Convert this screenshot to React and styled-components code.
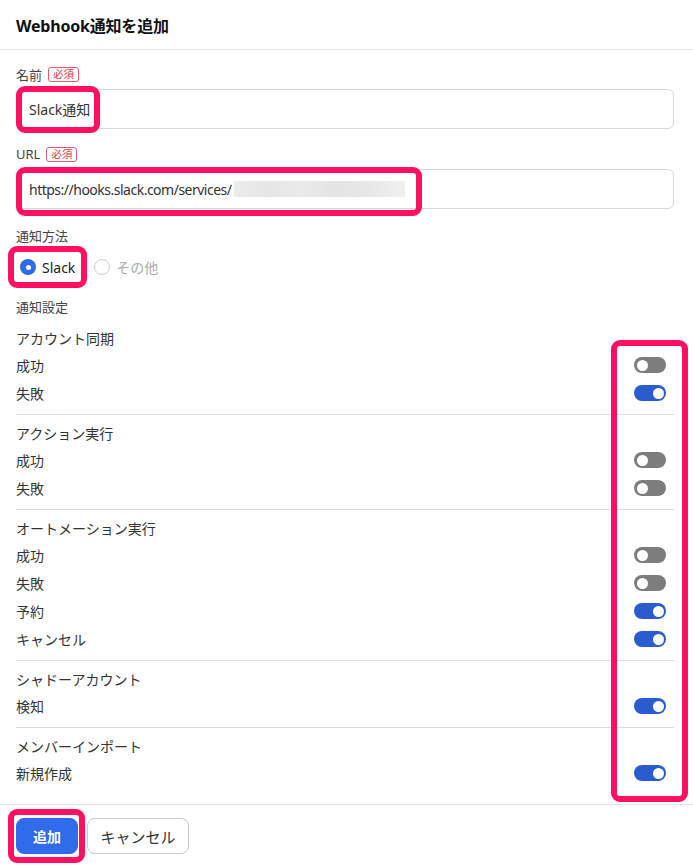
import React from "react";
import styled, { createGlobalStyle } from "styled-components";

const Global = createGlobalStyle`
  html, body { margin: 0; padding: 0; background: #fff; }
  * { box-sizing: border-box; }
  body { font-family: "Noto Sans", "Noto Sans CJK JP", sans-serif; color: #333; }
`;

const Page = styled.div`
  position: relative;
  width: 693px;
  min-height: 868px;
  background: #fff;
`;

const Header = styled.header`
  height: 50px;
  display: flex;
  align-items: center;
  padding: 0 16px;
  border-bottom: 1px solid #e4e4e4;
`;

const Title = styled.h1`
  margin: 0;
  font-size: 16px;
  font-weight: 700;
  color: #111;
  letter-spacing: -0.2px;
`;

const Body = styled.div`
  padding: 14px 19px 10px 16px;
`;

const Field = styled.div`
  display: flex;
  flex-direction: column;
  gap: 5px;
  margin-bottom: ${(p) => p.$mb || 15}px;
`;

const Label = styled.div`
  display: flex;
  align-items: center;
  gap: 6px;
  height: 20px;
  font-size: 13px;
  color: #444;
`;

const Badge = styled.span`
  display: inline-flex;
  align-items: center;
  height: 15px;
  padding: 0 4px;
  font-size: 10.5px;
  color: #e0334a;
  border: 1px solid #e65a6c;
  border-radius: 3px;
  line-height: 1;
`;

const Input = styled.div`
  height: 40px;
  display: flex;
  align-items: center;
  padding: 0 12px;
  border: 1px solid #d9d9d9;
  border-radius: 6px;
  font-size: 14px;
  color: #333;
`;

const UrlText = styled.span`
  letter-spacing: -0.5px;
`;

const Blur = styled.span`
  display: inline-block;
  width: 171px;
  height: 16px;
  margin-left: 2px;
  background: linear-gradient(90deg, #ececec 0%, #e6e6e6 20%, #eaeaea 40%, #e4e4e4 60%, #e8e8e8 80%, #f0f0f0 100%);
`;

const RadioRow = styled.div`
  display: flex;
  align-items: center;
  gap: 19px;
  height: 24px;
  margin: 10px 0 17px 4px;
`;

const RadioItem = styled.label`
  display: flex;
  align-items: center;
  gap: 6px;
  font-size: 14px;
  color: ${(p) => (p.$checked ? "#222" : "#aaa")};
`;

const RadioDot = styled.span`
  width: 16px;
  height: 16px;
  border-radius: 50%;
  display: inline-flex;
  align-items: center;
  justify-content: center;
  background: ${(p) => (p.$checked ? "#2f6bea" : "#fff")};
  border: ${(p) => (p.$checked ? "none" : "1.5px solid #cfcfcf")};
  &::after {
    content: "";
    display: ${(p) => (p.$checked ? "block" : "none")};
    width: 5px;
    height: 5px;
    border-radius: 50%;
    background: #fff;
  }
`;

const GroupList = styled.div`
  margin-top: 4px;
`;

const Group = styled.div`
  padding: 5px 0 7px;
  border-top: ${(p) => (p.$first ? "none" : "1px solid #dedede")};
`;

const GroupTitle = styled.div`
  height: 26px;
  display: flex;
  align-items: center;
  font-size: 14px;
  color: #333;
`;

const Row = styled.div`
  height: 28px;
  display: flex;
  align-items: center;
  justify-content: space-between;
  padding-right: 8px;
  font-size: 14px;
  color: #333;
`;

const Toggle = styled.span`
  position: relative;
  width: 32px;
  height: 16px;
  border-radius: 8px;
  background: ${(p) => (p.$on ? "#2a5bcf" : "#7d7d7d")};
  &::after {
    content: "";
    position: absolute;
    top: 2.5px;
    left: ${(p) => (p.$on ? "18.5px" : "2.5px")};
    width: 11px;
    height: 11px;
    border-radius: 50%;
    background: #fff;
  }
`;

const Footer = styled.footer`
  border-top: 1px solid #e4e4e4;
  padding: 13px 16px;
  display: flex;
  gap: 9px;
`;

const Button = styled.button`
  height: 36px;
  padding: 0 ${(p) => (p.$primary ? 16 : 12)}px;
  border-radius: 8px;
  font-family: inherit;
  font-size: ${(p) => (p.$primary ? 14 : 15)}px;
  font-weight: ${(p) => (p.$primary ? 700 : 400)};
  color: ${(p) => (p.$primary ? "#fff" : "#333")};
  background: ${(p) => (p.$primary ? "#2f6bea" : "#fff")};
  border: 1px solid ${(p) => (p.$primary ? "#2f6bea" : "#c8c8c8")};
  width: ${(p) => (p.$primary ? 62 : 102)}px;
`;

const Highlight = styled.div`
  position: absolute;
  border: 6px solid #ff1060;
  border-radius: 9px;
  pointer-events: none;
`;

const groups = [
  { title: "アカウント同期", items: [["成功", false], ["失敗", true]] },
  { title: "アクション実行", items: [["成功", false], ["失敗", false]] },
  {
    title: "オートメーション実行",
    items: [["成功", false], ["失敗", false], ["予約", true], ["キャンセル", true]],
  },
  { title: "シャドーアカウント", items: [["検知", true]] },
  { title: "メンバーインポート", items: [["新規作成", true]] },
];

const highlights = [
  { x: 16, y: 86, w: 84, h: 47 },
  { x: 16, y: 167, w: 406, h: 49 },
  { x: 8, y: 246, w: 79, h: 42 },
  { x: 611, y: 340, w: 77, h: 462 },
  { x: 8, y: 809, w: 77, h: 54 },
];

export default function App() {
  return (
    <Page>
      <Global />
      <Header>
        <Title>Webhook通知を追加</Title>
      </Header>
      <Body>
        <Field>
          <Label>
            名前<Badge>必須</Badge>
          </Label>
          <Input>Slack通知</Input>
        </Field>
        <Field $mb={16}>
          <Label>
            URL<Badge>必須</Badge>
          </Label>
          <Input>
            <UrlText>https://hooks.slack.com/services/</UrlText>
            <Blur />
          </Input>
        </Field>
        <Label>通知方法</Label>
        <RadioRow>
          <RadioItem $checked>
            <RadioDot $checked />
            Slack
          </RadioItem>
          <RadioItem>
            <RadioDot />
            その他
          </RadioItem>
        </RadioRow>
        <Label>通知設定</Label>
        <GroupList>
          {groups.map((g, i) => (
            <Group key={g.title} $first={i === 0}>
              <GroupTitle>{g.title}</GroupTitle>
              {g.items.map(([name, on]) => (
                <Row key={name}>
                  {name}
                  <Toggle $on={on} />
                </Row>
              ))}
            </Group>
          ))}
        </GroupList>
      </Body>
      <Footer>
        <Button $primary>追加</Button>
        <Button>キャンセル</Button>
      </Footer>
      {highlights.map((h, i) => (
        <Highlight
          key={i}
          style={{ left: h.x, top: h.y, width: h.w, height: h.h }}
        />
      ))}
    </Page>
  );
}
